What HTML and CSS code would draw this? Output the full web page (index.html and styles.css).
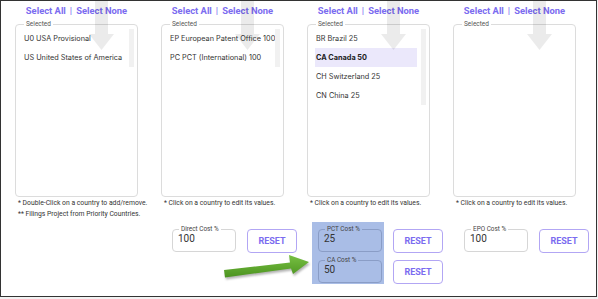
FILE: index.html
```html
<!DOCTYPE html>
<html lang="en">

<head>
    <meta charset="UTF-8">
    <title>Country Selection</title>
    <link rel="stylesheet" href="styles.css">
</head>

<body>
    <div class="frame">
        <div class="columns">
            <!-- Priority -->
            <div class="col">
                <div class="select-links"><a href="#">Select All</a><span class="sep">|</span><a href="#">Select None</a></div>
                <fieldset class="list-box">
                    <legend>Selected</legend>
                    <div class="list-wrap">
                        <div class="items">
                            <div class="item">U0 USA Provisional</div>
                            <div class="item">US United States of America</div>
                        </div>
                        <div class="track"></div>
                    </div>
                </fieldset>
                <div class="notes">
                    <p>* Double-Click on a country to add/remove.</p>
                    <p>** Filings Project from Priority Countries.</p>
                </div>
                <svg class="watermark" width="25" height="49" viewBox="0 0 25 49"><path d="M6 0h13v33h6L12.5 49 0 33h6z"/></svg>
            </div>

            <!-- Direct -->
            <div class="col">
                <div class="select-links"><a href="#">Select All</a><span class="sep">|</span><a href="#">Select None</a></div>
                <fieldset class="list-box">
                    <legend>Selected</legend>
                    <div class="list-wrap">
                        <div class="items">
                            <div class="item">EP European Patent Office 100</div>
                            <div class="item">PC PCT (International) 100</div>
                        </div>
                        <div class="track"></div>
                    </div>
                </fieldset>
                <div class="notes">
                    <p>* Click on a country to edit its values.</p>
                </div>
                <div class="cost">
                    <div class="cost-inputs">
                        <fieldset class="cost-field"><legend>Direct Cost %</legend><span>100</span></fieldset>
                    </div>
                    <div class="cost-buttons">
                        <button class="reset-btn">RESET</button>
                    </div>
                </div>
                <svg class="watermark" width="25" height="49" viewBox="0 0 25 49"><path d="M6 0h13v33h6L12.5 49 0 33h6z"/></svg>
            </div>

            <!-- PCT -->
            <div class="col">
                <div class="select-links"><a href="#">Select All</a><span class="sep">|</span><a href="#">Select None</a></div>
                <fieldset class="list-box">
                    <legend>Selected</legend>
                    <div class="list-wrap">
                        <div class="items">
                            <div class="item">BR Brazil 25</div>
                            <div class="item active">CA Canada 50</div>
                            <div class="item">CH Switzerland 25</div>
                            <div class="item">CN China 25</div>
                        </div>
                        <div class="track"></div>
                    </div>
                </fieldset>
                <div class="notes">
                    <p>* Click on a country to edit its values.</p>
                </div>
                <div class="cost">
                    <div class="cost-inputs marked">
                        <fieldset class="cost-field"><legend>PCT Cost %</legend><span>25</span></fieldset>
                        <fieldset class="cost-field"><legend>CA Cost %</legend><span>50</span></fieldset>
                    </div>
                    <div class="cost-buttons">
                        <button class="reset-btn">RESET</button>
                        <button class="reset-btn">RESET</button>
                    </div>
                </div>
                <svg class="watermark" width="25" height="49" viewBox="0 0 25 49"><path d="M6 0h13v33h6L12.5 49 0 33h6z"/></svg>
            </div>

            <!-- EPO -->
            <div class="col">
                <div class="select-links"><a href="#">Select All</a><span class="sep">|</span><a href="#">Select None</a></div>
                <fieldset class="list-box">
                    <legend>Selected</legend>
                    <div class="list-wrap">
                        <div class="items"></div>
                        <div class="track"></div>
                    </div>
                </fieldset>
                <div class="notes">
                    <p>* Click on a country to edit its values.</p>
                </div>
                <div class="cost">
                    <div class="cost-inputs">
                        <fieldset class="cost-field"><legend>EPO Cost %</legend><span>100</span></fieldset>
                    </div>
                    <div class="cost-buttons">
                        <button class="reset-btn">RESET</button>
                    </div>
                </div>
                <svg class="watermark" width="25" height="49" viewBox="0 0 25 49"><path d="M6 0h13v33h6L12.5 49 0 33h6z"/></svg>
            </div>
        </div>

        <!-- annotation arrow -->
        <svg class="pointer" width="95" height="32" viewBox="0 0 95 32">
            <defs>
                <linearGradient id="g" x1="0" y1="0" x2="0" y2="1">
                    <stop offset="0" stop-color="#78c043" />
                    <stop offset="1" stop-color="#4b931f" />
                </linearGradient>
            </defs>
            <polygon fill="url(#g)" points="5,22 71,14.5 70,7 90,14 74,26 72,20.5 6,29.5" />
        </svg>
    </div>
</body>

</html>
```

FILE: styles.css
```css
* {
    margin: 0;
    padding: 0;
    box-sizing: border-box
}

body {
    background: #f2f2f2;
    font-family: Inter, 'Noto Sans', sans-serif;
    color: #333
}

.frame {
    position: relative;
    width: 597px;
    height: 297px;
    background: #fff;
    border: 1px solid #333
}

.columns {
    display: grid;
    grid-template-columns: repeat(4, 123px);
    column-gap: 23px;
    padding-left: 14px
}

.col {
    position: relative;
    display: flex;
    flex-direction: column;
    min-width: 0
}

.select-links {
    height: 19px;
    line-height: 19px;
    text-align: center;
    font-family: Roboto, sans-serif;
    font-size: 9.4px;
    font-weight: 700;
    white-space: nowrap
}

.select-links a {
    color: #7b6cf0;
    text-decoration: none
}

.select-links .sep {
    color: #7b6cf0;
    margin: 0 4px;
    font-weight: 400
}

.list-box {
    min-width: 0;
    width: 123px;
    height: 177px;
    border: 1px solid #dcdcdc;
    border-radius: 4px;
    padding: 1px 3px 3px 7px
}

.list-box legend {
    font-family: Roboto, sans-serif;
    font-size: 6.5px;
    line-height: 8px;
    color: #555;
    margin-left: 1px;
    padding: 0 2px
}

.list-wrap {
    display: flex;
    gap: 4px;
    height: 100%
}

.items {
    flex: 1;
    min-width: 0
}

.item {
    height: 19px;
    line-height: 19px;
    font-size: 7.3px;
    color: #333;
    padding-left: 1px;
    white-space: nowrap
}

.item.active {
    background: #ebe8fb;
    font-weight: 700;
    color: #222
}

.track {
    width: 5px;
    background: #f1f1f1
}

.notes {
    height: 25px;
    padding: 1px 0 0 3px;
    font-family: Roboto, sans-serif;
    font-size: 6.8px;
    line-height: 11px;
    color: #333;
    white-space: nowrap
}

.cost {
    display: flex;
    gap: 9px;
    margin-left: 5px
}

.cost-inputs {
    display: flex;
    flex-direction: column;
    gap: 4px;
    padding: 3px 2px 0 6px
}

.cost-inputs.marked {
    background: #a9bde6
}

.cost-field {
    min-width: 0;
    width: 64px;
    height: 27px;
    border: 1px solid #d6d6d6;
    border-radius: 4px;
    padding: 0 5px;
    font-family: Roboto, sans-serif
}

.marked .cost-field {
    border-color: #8a9dc6
}

.cost-field legend {
    font-size: 6.4px;
    line-height: 8px;
    color: #444;
    padding: 0 2px;
    margin-left: 1px
}

.cost-field span {
    display: block;
    font-size: 10px;
    line-height: 12px;
    color: #333
}

.cost-buttons {
    display: flex;
    flex-direction: column;
    gap: 7px;
    padding-top: 7px
}

.reset-btn {
    width: 50px;
    height: 24px;
    background: #fff;
    border: 1.5px solid #b2a6f4;
    border-radius: 4px;
    color: #7b6cf0;
    font-family: Roboto, sans-serif;
    font-size: 9px;
    font-weight: 700
}

.watermark {
    position: absolute;
    left: 74px;
    top: 0;
    fill: rgba(0, 0, 0, .08)
}

.pointer {
    position: absolute;
    left: 218px;
    top: 247px;
    filter: drop-shadow(1px 2px 1px rgba(0, 0, 0, .3))
}
```
